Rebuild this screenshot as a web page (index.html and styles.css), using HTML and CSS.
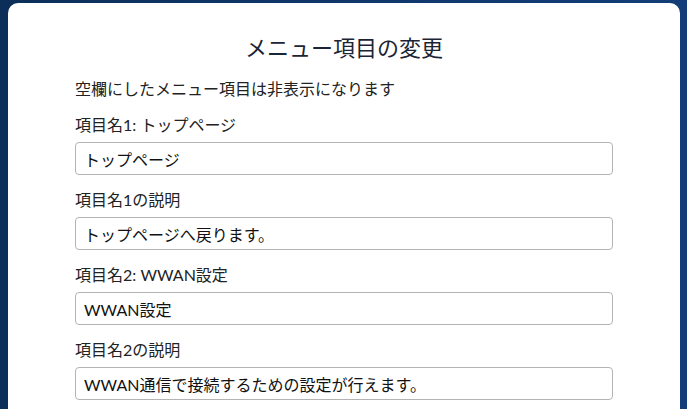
FILE: index.html
```html
<!DOCTYPE html>
<html>
<head>
    <title>メニュー項目の変更</title>
    <link rel="stylesheet" href="styles.css">
</head>
<body>
    <div class="card">
        <h1 class="card-title">メニュー項目の変更</h1>
        <p class="note">空欄にしたメニュー項目は非表示になります</p>

        <div class="field">
            <label for="name1">項目名1: トップページ</label>
            <input type="text" id="name1" value="トップページ">
        </div>
        <div class="field">
            <label for="desc1">項目名1の説明</label>
            <input type="text" id="desc1" value="トップページへ戻ります。">
        </div>
        <div class="field">
            <label for="name2">項目名2: WWAN設定</label>
            <input type="text" id="name2" value="WWAN設定">
        </div>
        <div class="field">
            <label for="desc2">項目名2の説明</label>
            <input type="text" id="desc2" value="WWAN通信で接続するための設定が行えます。">
        </div>
    </div>
</body>
</html>
```

FILE: styles.css
```css
* { box-sizing: border-box; margin: 0; padding: 0; }
html, body {
    height: 100%;
    overflow: hidden;
}
body {
    font-family: Lato, 'Noto Sans CJK JP', sans-serif;
    background: linear-gradient(90deg, #0b2f58 0%, #0f376b 50%, #123d78 100%);
    padding: 3px 7px 0 8px;
    color: #222;
}
.card {
    background: white;
    border-radius: 10px 10px 0 0;
    padding: 32px 67px 0;
    min-height: 100%;
}
.card-title {
    text-align: center;
    font-size: 22px;
    line-height: 26px;
    font-weight: 400;
    color: #1c2535;
}
.note {
    margin-top: 16px;
    font-size: 16px;
    line-height: 24px;
}
.field {
    margin-top: 12px;
    display: flex;
    flex-direction: column;
    gap: 5px;
}
.field + .field {
    margin-top: 13px;
}
.field label {
    font-size: 16px;
    line-height: 24px;
}
.field input {
    height: 33px;
    padding: 0 8px;
    border: 1px solid #b3b3b3;
    border-radius: 4px;
    font-family: inherit;
    font-size: 16px;
    color: #111;
    outline: none;
}
```
